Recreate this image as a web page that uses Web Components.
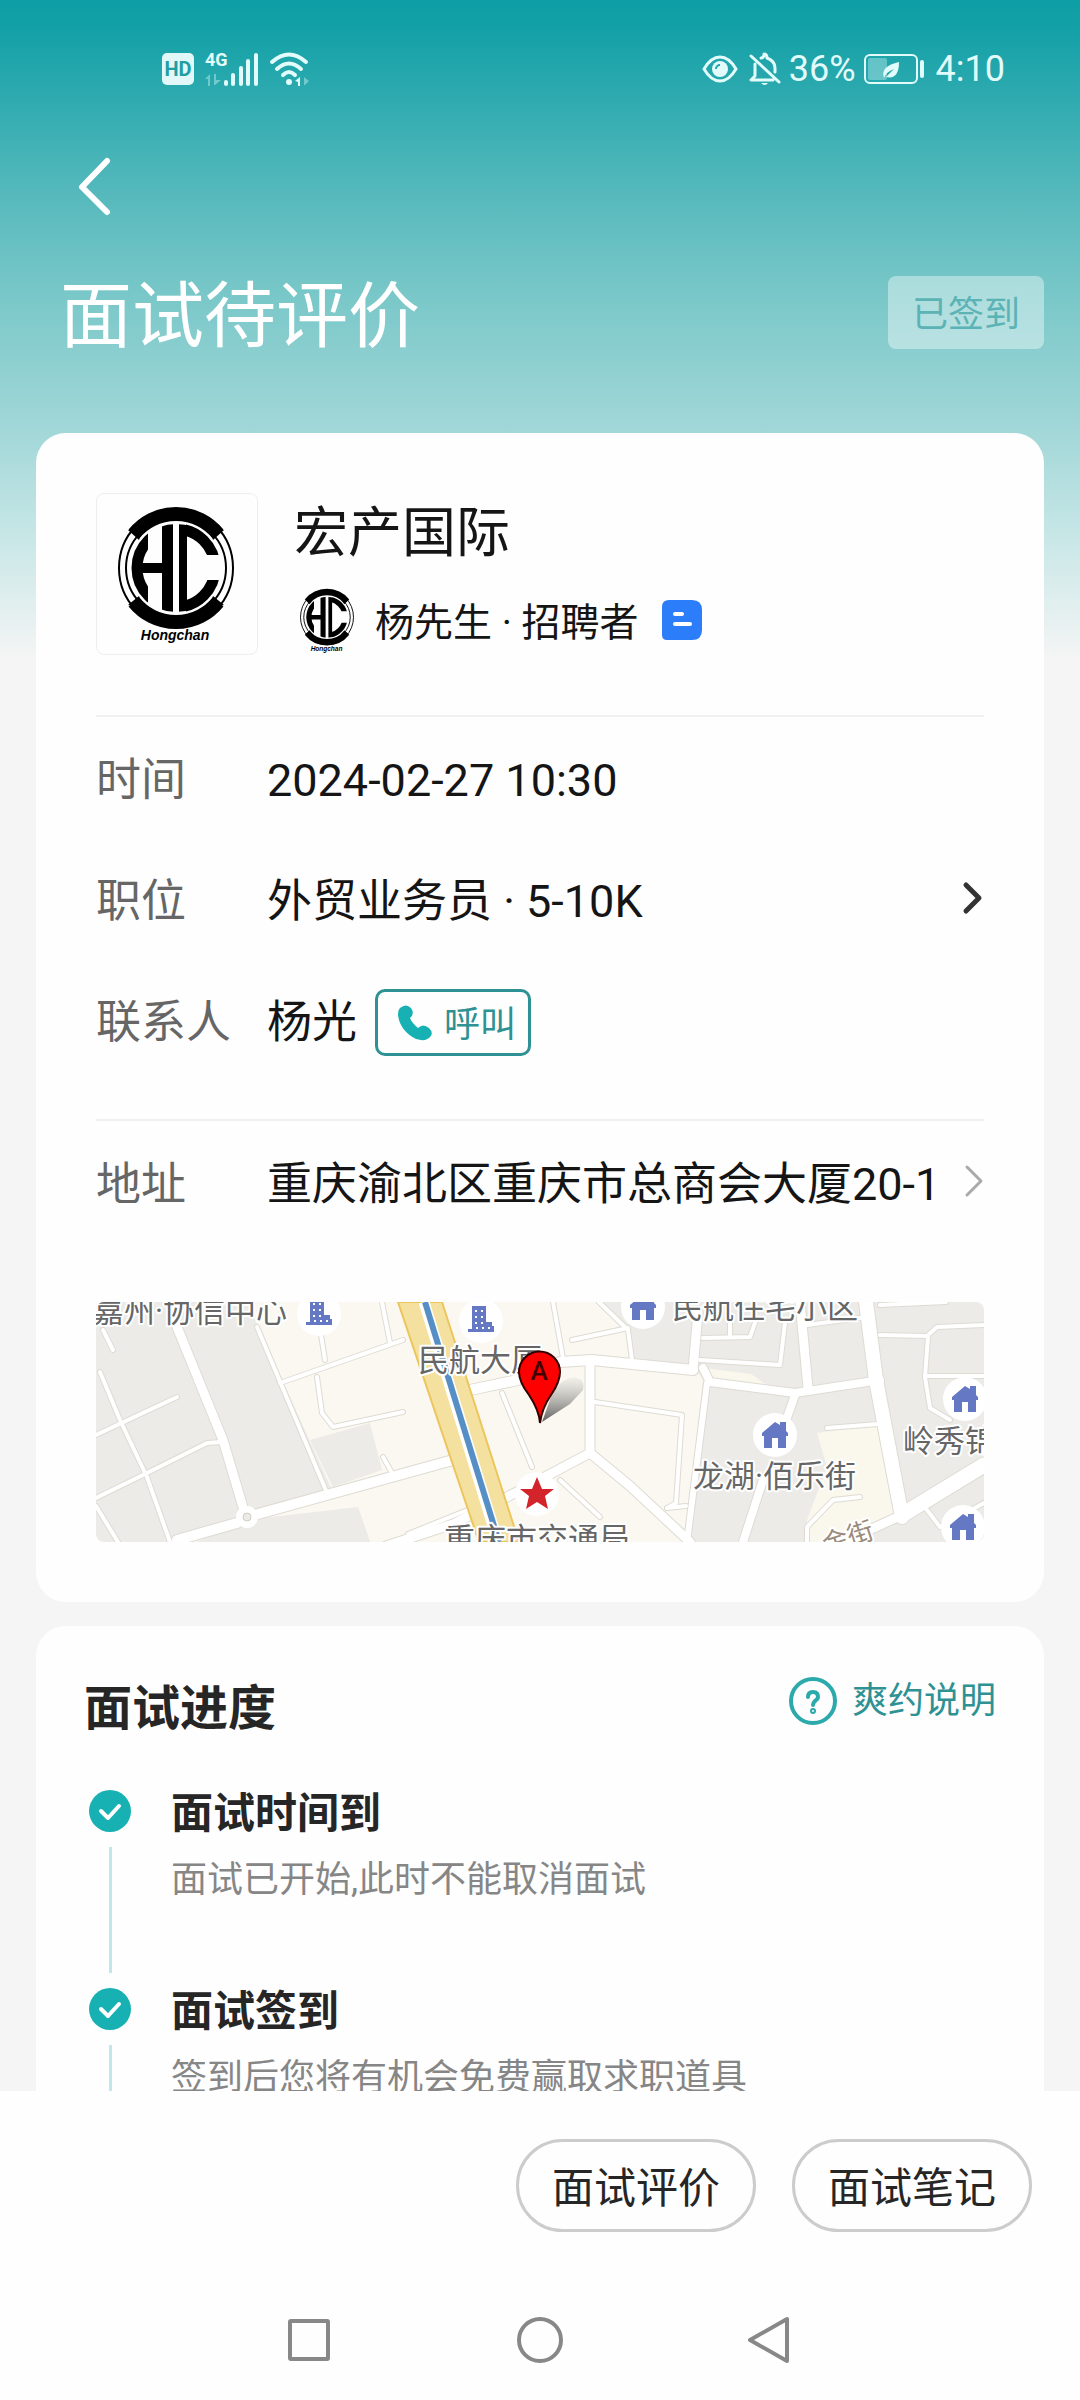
<!DOCTYPE html>
<html lang="zh-CN">
<head>
<meta charset="utf-8">
<meta name="viewport" content="width=device-width, initial-scale=1">
<title>面试待评价</title>
<style>
  html, body { margin: 0; height: 100%; }
  body {
    font-family: Roboto, "Noto Sans CJK SC", sans-serif;
    color: #151515;
    --teal: #18b1b3;
    --teal-dark: #2e9193;
    --line: #f0f0f0;
  }
</style>
</head>
<body>
<interview-screen>
  <status-bar slot="top"></status-bar>
  <page-header slot="top" state="已签到">面试待评价</page-header>

  <content-card>
    <company-summary name="宏产国际" person="杨先生 · 招聘者"></company-summary>
    <info-group>
      <info-row label="时间">2024-02-27 10:30</info-row>
      <info-row label="职位" chevron="strong">外贸业务员 · 5-10K</info-row>
      <info-row label="联系人">杨光<call-button></call-button></info-row>
    </info-group>
    <info-group last>
      <info-row label="地址" chevron="light">重庆渝北区重庆市总商会大厦20-1</info-row>
    </info-group>
    <map-preview></map-preview>
  </content-card>

  <content-card compact>
    <progress-header heading="面试进度">爽约说明</progress-header>
    <progress-step heading="面试时间到">面试已开始,此时不能取消面试</progress-step>
    <progress-step heading="面试签到">签到后您将有机会免费赢取求职道具</progress-step>
  </content-card>

  <action-bar slot="bottom">
    <pill-button>面试评价</pill-button>
    <pill-button>面试笔记</pill-button>
  </action-bar>
  <system-nav slot="bottom"></system-nav>
</interview-screen>

<script>
const define = (tag, css, html) => {
  customElements.define(tag, class extends HTMLElement {
    connectedCallback() {
      if (this.shadowRoot) return;
      const attr = name => this.getAttribute(name) || '';
      const body = typeof html === 'function' ? html(attr) : html;
      this.attachShadow({ mode: 'open' }).innerHTML =
        `<style>*{box-sizing:border-box}svg{display:block;flex:none}button{font:inherit;color:inherit;background:none;border:0;padding:0;margin:0;cursor:pointer}${css}</style>${body}`;
    }
  });
};

define('interview-screen', `
  :host { display: flex; flex-direction: column; height: 100vh; overflow: hidden;
    background: linear-gradient(#0d9fa5 0, #14a1a7 32px, #2fabb0 100px, #58babd 200px, #7bc8c9 300px, #a2d7d8 430px, #c9e7e7 540px, #f5f5f5 660px); }
  main { flex: 1; min-height: 0; overflow: hidden; padding: 0 36px; display: flex; flex-direction: column; gap: 24px; }
  footer { background: #fefefe; }
`, `<slot name="top"></slot><main><slot></slot></main><footer><slot name="bottom"></slot></footer>`);

define('status-bar', `
  :host { display: flex; justify-content: space-between; align-items: center; height: 138px; padding: 0 75px 0 162px; color: #e2fbfb; font-size: 36px; line-height: 40px; }
  div { display: flex; align-items: center; }
  svg { overflow: visible; }
  .left { gap: 11px; }
  .right { gap: 8px; }
  .eye { margin-right: 3px; }
  .battery { margin-right: 3px; }
`, `
  <div class="left">
    <svg width="32" height="34" viewBox="0 0 32 34"><rect y="1" width="32" height="32" rx="5" fill="#e2f8f8"/><text x="16" y="24" text-anchor="middle" font-size="20" font-weight="700" fill="#1f9fa4">HD</text></svg>
    <svg width="54" height="34" viewBox="0 0 54 34" fill="#e2fbfb"><text x="0" y="14" font-size="18" font-weight="700">4G</text>
      <path d="M0 27l5-5v12h-2v-7zM9 22h2v6h5l-6 5h-1z" opacity=".4"/>
      <g stroke="#e2fbfb" stroke-width="4" stroke-linecap="round"><path d="M21 30v2M28 23v9M36 16v16M43 9v23M51 3v29"/></g></svg>
    <svg width="40" height="34" viewBox="0 0 40 34" fill="none" stroke="#e2fbfb" stroke-width="4" stroke-linecap="round"><path d="M2 10Q19-5 36 10M7 17Q19 6 31 17M13 23Q19 17 25 23"/><circle cx="19" cy="30" r="3" fill="#e2fbfb" stroke="none"/><path d="M25 29l5-4v9h-2v-4z" fill="#e2fbfb" stroke="none"/><path d="M34 25l5 4-4 4h-1z" fill="#e2fbfb" stroke="none" opacity=".4"/></svg>
  </div>
  <div class="right">
    <svg class="eye" width="36" height="34" viewBox="0 0 36 34" fill="none" stroke="#e2fbfb" stroke-width="3"><path d="M2 17Q9 5 18 5T34 17Q27 29 18 29T2 17Z"/><circle cx="18" cy="17" r="8" fill="#e2fbfb" stroke="none"/><path d="M14 17a4 4 0 0 1 4-4" stroke="#1fa4a9" stroke-width="2"/></svg>
    <svg width="32" height="34" viewBox="0 0 32 34" fill="none" stroke="#e2fbfb" stroke-width="3" stroke-linecap="round" stroke-linejoin="round"><path d="M2 4l28 26M6 12v12l-4 4h22M12 6q3 0 3-4 3 0 3 4 8 3 8 10v4"/><path d="M12 31h7q-3 4-7 0z" fill="#e2fbfb" stroke="none"/></svg>
    <span>36%</span>
    <svg class="battery" width="61" height="34" viewBox="0 0 61 34"><rect x="1" y="3" width="52" height="28" rx="5" fill="none" stroke="#e2fbfb" stroke-width="2"/><rect x="4" y="6" width="19" height="22" rx="2" fill="#e2fbfb" opacity=".35"/><path d="M20 26Q16 14 35 10Q35 28 22 25L30 17Q22 20 20 26Z" fill="#e2fbfb"/><rect x="56" y="8" width="4" height="18" rx="2" fill="#e2fbfb"/></svg>
    <span>4:10</span>
  </div>`);

define('page-header', `
  :host { display: block; color: #fff; }
  nav { height: 98px; padding-left: 72px; display: flex; align-items: center; }
  .row { display: flex; justify-content: space-between; align-items: center; padding: 36px 36px 80px 60px; }
  h1 { margin: 0; padding-top: 8px; font-size: 72px; font-weight: 400; line-height: 73px; }
  .state { font-size: 36px; line-height: 67px; padding: 6px 24px 0; border-radius: 8px; color: #5bb3b5; background: rgba(255,255,255,.4); }
`, a => `
  <nav><button aria-label="返回"><svg width="46" height="62" viewBox="0 0 46 62" fill="none" stroke="#fff" stroke-width="6" stroke-linecap="round" stroke-linejoin="round"><path d="M35 5L10 31L35 56"/></svg></button></nav>
  <div class="row"><h1><slot></slot></h1><span class="state">${a('state')}</span></div>`);

define('content-card', `
  :host { display: block; flex: none; padding: 60px; background: #fefefe; border-radius: 30px; }
  :host([compact]) { padding: 48px 48px 0; }
`, `<slot></slot>`);

define('hc-logo', `:host { display: block; flex: none; }`, a => `
  <svg ${a('size') === 'small' ? 'width="66" height="70" viewBox="9 6 142 150"' : 'width="160" height="160" viewBox="1 1 160 160"'}>
    <defs>
      <clipPath id="disc"><circle cx="80" cy="75" r="44"/></clipPath>
      <clipPath id="h"><rect x="30" y="20" width="22" height="110"/></clipPath>
      <clipPath id="c"><path d="M90 20h50v42H90zM90 87h50v43H90z"/></clipPath>
    </defs>
    <g fill="none" stroke="#000">
      <ellipse cx="80" cy="75" rx="57" ry="59" stroke-width="2"/>
      <circle cx="80" cy="75" r="50" stroke-width="2"/>
      <path d="M38 41A54 54 0 0 1 122 41M38 109A54 54 0 0 0 122 109" stroke-width="14"/>
      <circle cx="80" cy="75" r="39" stroke-width="11" clip-path="url(#h)"/>
      <circle cx="80" cy="75" r="39" stroke-width="11" clip-path="url(#c)"/>
    </g>
    <path d="M32 37L47 34L43 47ZM128 37L113 34L117 47ZM32 112L47 115L43 103ZM128 112L113 115L117 103Z"/>
    <path clip-path="url(#disc)" d="M36 70h30V20h11v110H66V80H36zM83 20h8v110h-8z"/>
    <text x="79" y="147" text-anchor="middle" font-family="Liberation Sans, sans-serif" font-size="14" font-weight="700" font-style="italic">Hongchan</text>
  </svg>`);

define('company-summary', `
  :host { display: flex; gap: 36px; padding-bottom: 54px; border-bottom: 2px solid var(--line); }
  .logo { width: 162px; height: 162px; flex: none; border: 1px solid #eee; border-radius: 8px; overflow: hidden; }
  h2 { margin: 0 0 4px; font-size: 54px; font-weight: 400; line-height: 82px; }
  .person { display: flex; align-items: center; height: 82px; gap: 15px; font-size: 39px; line-height: 60px; }
  .person span { padding-top: 6px; }
  .badge { margin-left: 8px; }
`, a => `
  <div class="logo"><hc-logo></hc-logo></div>
  <div><h2>${a('name')}</h2>
    <div class="person"><hc-logo size="small"></hc-logo><span>${a('person')}</span>
      <svg class="badge" width="40" height="40" viewBox="0 0 40 40"><path d="M7 0H30Q40 0 40 10V30Q40 40 30 40H5Q0 40 0 35V7Q0 0 7 0Z" fill="#2b7df9"/><path d="M13 14h7M13 24h15" stroke="#fff" stroke-width="4" stroke-linecap="round"/></svg></div></div>`);

define('info-group', `
  :host { display: block; padding: 2px 0 37px; border-bottom: 2px solid var(--line); }
  :host([last]) { padding-bottom: 58px; border: 0; }
`, `<slot></slot>`);

define('info-row', `
  :host { display: flex; align-items: center; height: 121px; font-size: 45px; line-height: 60px; }
  .label { width: 171px; flex: none; padding-top: 2px; color: #666; }
  .value { flex: 1; display: flex; align-items: center; gap: 18px; padding-top: 2px; white-space: nowrap; }
  button { padding-bottom: 5px; }
`, a => `
  <span class="label">${a('label')}</span><span class="value"><slot></slot></span>
  ${a('chevron') ? `<button aria-label="查看${a('label')}"><svg width="22" height="34" viewBox="0 0 22 34" fill="none" ${a('chevron') === 'strong' ? 'stroke="#333" stroke-width="5"' : 'stroke="#aaa" stroke-width="3"'} stroke-linecap="round" stroke-linejoin="round"><path d="${a('chevron') === 'strong' ? 'M4 4L17 17L4 30' : 'M5 3L19 17L5 31'}"/></svg></button>` : ''}`);

define('call-button', `
  :host { display: block; }
  button { display: flex; align-items: center; gap: 12px; height: 67px; padding: 0 12px 0 20px; border: 3px solid var(--teal-dark); border-radius: 10px; color: var(--teal-dark); font-size: 36px; }
  span { padding-top: 4px; }
`, `<button><svg width="34" height="36" viewBox="0 0 34 36" fill="#18b1b3"><path d="M2 3Q8-2 13 3Q17 9 12 13Q14 18 20 23Q25 18 31 23Q36 28 32 32Q28 37 18 34Q2 26 0 10Q0 5 2 3Z"/></svg><span>呼叫</span></button>`);

define('map-preview', `
  :host { display: block; height: 240px; border-radius: 8px; overflow: hidden; }
  svg { width: 100%; height: 100%; }
  text { font-size: 31px; fill: #666; stroke: #fff; stroke-width: 4px; stroke-linejoin: round; paint-order: stroke; }
`, () => {
  const wide = [
    ['M75 0L81 25L127 138L149 212', 9], ['M151 215L357 158M374 88L422 78L464 60L496 58L597 68', 10],
    ['M81 238L141 221', 10], ['M494 58V151L411 195L357 222L290 244', 9], ['M494 151L534 184L594 240', 9],
    ['M602 10L597 68', 9], ['M607 66L614 80L699 91L784 78', 8], ['M611 81L591 240', 6],
    ['M704 0L712 86', 9], ['M770 0L780 78L806 215', 14], ['M806 213L888 163', 15], ['M806 213L771 229L740 246', 9],
    ['M699 93L686 130M668 175L647 240', 8]
  ];
  const thin = ['M4 70L24 118L51 175L74 240', 'M0 133L81 95', 'M0 196L51 171L111 141L126 140', 'M0 204L22 240', 'M7 28L17 48',
    'M161 25L231 191', 'M184 81L307 38', 'M286 0L294 41', 'M223 20L229 58', 'M221 75L226 111L237 125L307 110', 'M287 155L296 171',
    'M406 91L436 165', 'M457 0L467 56', 'M503 0L532 28L536 58', 'M476 38L532 26', 'M604 58L684 63L689 21', 'M607 36L654 35L660 18', 'M634 34V18',
    'M711 23L764 16', 'M784 33L831 34L841 25L888 23', 'M832 35L829 75L834 106L854 118', 'M829 74H888', 'M499 100L586 113L580 201L571 206', 'M731 126L782 122',
    'M464 178L504 215', 'M831 208L844 225L888 201', 'M711 240V225L737 198L764 195', 'M784 3L850 0', 'M312 232L374 207', 'M571 206L590 204'];
  const lines = (color, extra) =>
    wide.map(([d, w]) => `<path d="${d}" stroke="${color}" stroke-width="${w + extra}"/>`).join('') +
    thin.map(d => `<path d="${d}" stroke="${color}" stroke-width="${4 + extra}"/>`).join('');
  const tower = (x, y) => `<g transform="translate(${x} ${y})"><circle r="22" fill="#fff"/><path d="M-9 -15h14V1h6v4h2v6h-26V8h4z" fill="#6578c4"/><path d="M-5 -11v14M1 -11v18M-5 7h14" stroke="#fff" stroke-width="2" stroke-dasharray="2 4"/></g>`;
  const house = (x, y) => `<g transform="translate(${x} ${y})"><circle r="22" fill="#fff"/><path d="M0 -13L5 -10L5 -13H11V-4L13 -2V1H11V13H3V3H-3V13H-11V1H-13V-2Z" fill="#6578c4"/></g>`;
  return `<svg viewBox="0 0 888 240" preserveAspectRatio="xMidYMid slice" role="img" aria-label="地图">
    <defs><linearGradient id="shade" x1="0" y1="0" x2="0" y2="1"><stop offset="0" stop-color="#999" stop-opacity=".1"/><stop offset="1" stop-color="#444" stop-opacity=".85"/></linearGradient></defs>
    <rect width="888" height="240" fill="#ecebe8"/>
    <path d="M151 0H501L534 28L536 58L596 62L607 78L590 240H274L262 205L120 240H90L150 215L237 190Z" fill="#faf8f0"/>
    <path d="M214 138L274 121L286 168L237 185ZM150 218L262 205L274 240H100Z" fill="#ecebe8"/>
    <path d="M721 131L784 121L801 211L777 221L731 240H712L711 218L731 165ZM608 66L655 72L680 90L614 80Z" fill="#faf7ec"/>
    <g fill="none" stroke-linecap="round" stroke-linejoin="round">${lines('#dedbd3', 2)}${lines('#fff', 0)}</g>
    <circle cx="151" cy="215" r="11" fill="#fff"/><circle cx="151" cy="215" r="4" fill="#ecebe8" stroke="#d0ccc4"/>
    <path d="M302 0H346L423 240H383Z" fill="#f4e19f" stroke="#ecc65c" stroke-width="2"/>
    <path d="M328 0L402 240" stroke="#fff" stroke-width="11"/><path d="M329 0L403 240" stroke="#568fc6" stroke-width="6"/>
    ${tower(223, 12)}${tower(385, 19)}${house(547, 5)}${house(679, 133)}${house(869, 97)}${house(867, 225)}
    <circle cx="441" cy="192" r="22" fill="#fff"/><path d="M441 175L446 187H458L449 194L452 207L441 200L430 207L433 194L424 187H436Z" fill="#d3242b"/>
    <text x="-3" y="20">嘉州·协信中心</text><text x="322" y="69">民航大厦</text><text x="576" y="16">民航住宅小区</text>
    <text x="597" y="185">龙湖·佰乐街</text><text x="807" y="150">岭秀锦</text><text x="348" y="248">重庆市交通局</text>
    <text x="730" y="252" transform="rotate(-18 730 252)" style="font-size:26px;fill:#9a8b7b">金街</text>
    <path d="M446 120L456 92Q462 80 474 76Q490 74 487 88L474 102Z" fill="url(#shade)"/>
    <path d="M444 121Q443 108 433 93Q423 80 423 70A20 20 0 0 1 464 70Q464 80 455 93Q446 106 444 121Z" fill="#fe0000" stroke="#300" stroke-width="2"/>
    <text x="443" y="78" text-anchor="middle" style="font-size:26px;font-weight:500;fill:#400;stroke:none">A</text>
  </svg>`;
});

define('progress-header', `
  :host { display: flex; justify-content: space-between; align-items: flex-start; margin-bottom: 46px; }
  h2 { margin: 0; font-size: 48px; font-weight: 700; line-height: 70px; color: #262626; }
  a { display: flex; align-items: center; gap: 15px; font-size: 36px; line-height: 54px; color: var(--teal-dark); text-decoration: none; }
`, a => `<h2>${a('heading')}</h2><a href="#"><svg width="48" height="48" viewBox="0 0 48 48" fill="none" stroke="#2ba9ab" stroke-width="4" stroke-linecap="round"><circle cx="24" cy="24" r="22"/><path d="M19 20Q19 15 24 15T29 20Q29 22 26 24Q24 26 24 28"/><circle cx="24" cy="34" r="1"/></svg><slot></slot></a>`);

define('progress-step', `
  :host { display: flex; gap: 40px; padding-left: 5px; }
  .marker { display: flex; flex-direction: column; align-items: center; }
  .marker i { flex: 1; width: 3px; margin: 15px 0; background: #bfe6e8; }
  .body { padding-bottom: 82px; }
  h3 { margin: 0 0 16px; font-size: 42px; line-height: 48px; font-weight: 700; color: #262626; }
  p { margin: 0; font-size: 36px; line-height: 52px; color: #868686; }
`, a => `<div class="marker"><svg width="42" height="42" viewBox="0 0 42 42"><circle cx="21" cy="21" r="21" fill="#18b1b3"/><path d="M12 21L19 28L30 16" fill="none" stroke="#fff" stroke-width="4" stroke-linecap="round" stroke-linejoin="round"/></svg><i></i></div>
  <div class="body"><h3>${a('heading')}</h3><p><slot></slot></p></div>`);

define('action-bar', `:host { display: flex; justify-content: flex-end; gap: 36px; padding: 48px; }`, `<slot></slot>`);

define('pill-button', `
  :host { display: block; }
  button { display: block; height: 93px; padding: 0 33px 2px; border: 3px solid #ccc; border-radius: 47px; font-size: 42px; color: #262626; }
`, `<button><slot></slot></button>`);

define('system-nav', `
  :host { display: flex; justify-content: center; height: 120px; }
  button { width: 231px; display: flex; align-items: center; justify-content: center; }
  svg { fill: none; stroke: #888; stroke-width: 4; stroke-linejoin: round; }
`, `
  <button aria-label="最近任务"><svg width="48" height="48" viewBox="0 0 48 48"><rect x="5" y="5" width="38" height="38" rx="1"/></svg></button>
  <button aria-label="主屏幕"><svg width="48" height="48" viewBox="0 0 48 48"><circle cx="24" cy="24" r="21"/></svg></button>
  <button aria-label="返回"><svg width="48" height="48" viewBox="0 0 48 48"><path d="M40 3V45L3 24Z"/></svg></button>`);
</script>
</body>
</html>
